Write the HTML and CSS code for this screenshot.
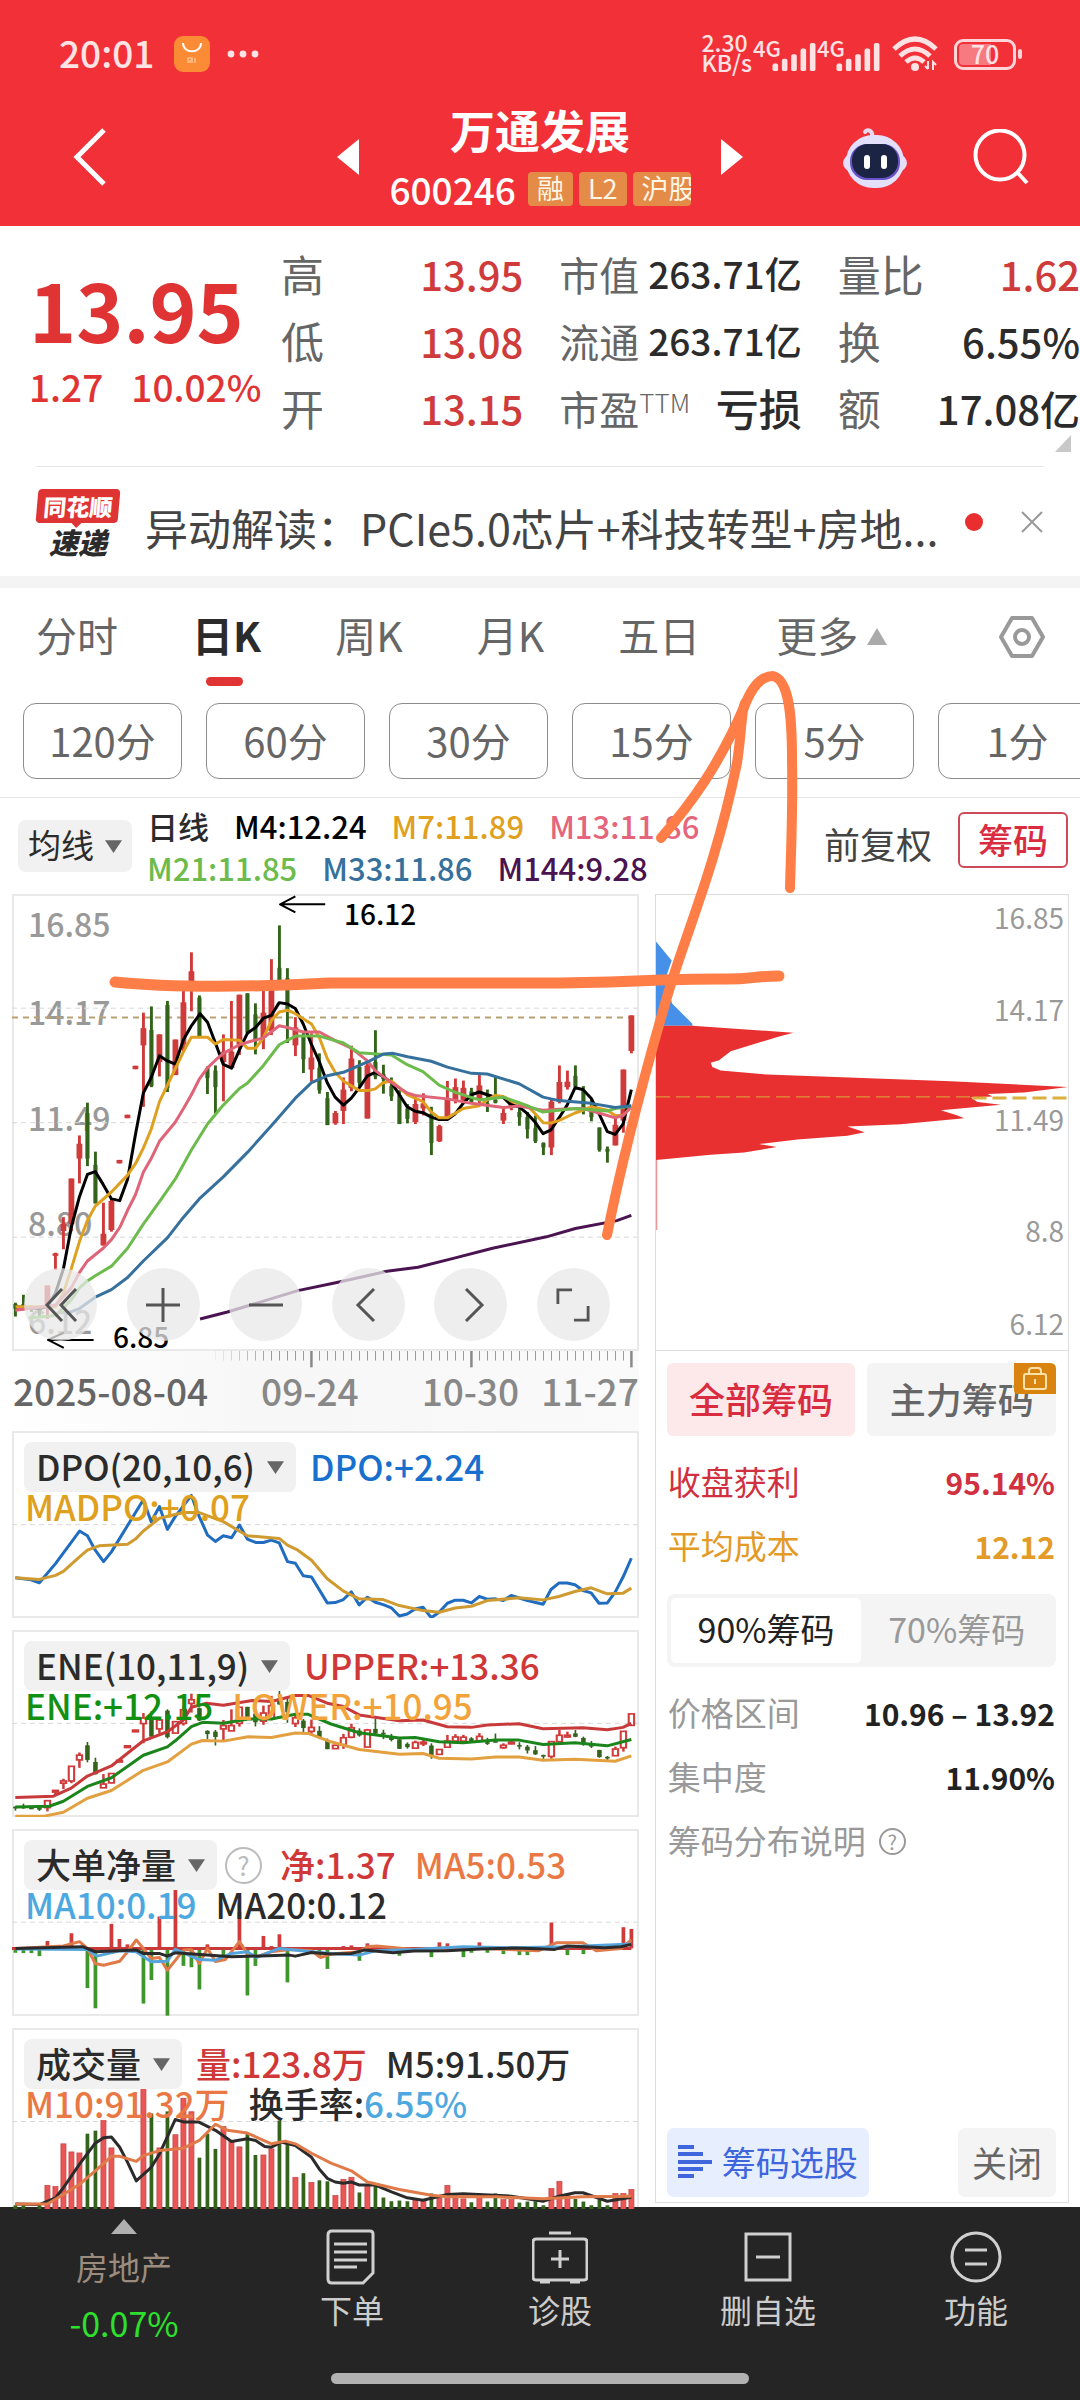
FILE: index.html
```html
<!DOCTYPE html>
<html lang="zh-CN">
<head>
<meta charset="utf-8">
<meta name="viewport" content="width=device-width, initial-scale=1">
<title>万通发展 600246</title>
<link rel="stylesheet" href="styles.css">
</head>
<body>
<div class="app">
  <header class="top">
    <div class="status">
      <span class="clock">20:01</span>
      <svg class="store" viewBox="0 0 36 36"><rect width="36" height="36" rx="9" fill="#fb8b34"/><path d="M9 7c0 11 18 11 18 0" fill="none" stroke="#fff" stroke-width="2"/><path d="M14 27v-5h4v5m-2-3v3m5-5v5" fill="none" stroke="#ffd2a6" stroke-width="1.2"/></svg>
      <svg class="dots" viewBox="0 0 32 8" fill="#ffe3e4"><circle cx="4" cy="4" r="3.4"/><circle cx="16" cy="4" r="3.4"/><circle cx="28" cy="4" r="3.4"/></svg>
      <span class="speed"><span>2.30</span><span>KB/s</span></span>
      <span class="net"><span>4G</span><svg viewBox="0 0 46 30" fill="#ffe3e4"><rect y="22" width="6" height="8" rx="2"/><rect x="10" y="17" width="6" height="13" rx="2"/><rect x="20" y="12" width="6" height="18" rx="2"/><rect x="30" y="6" width="6" height="24" rx="2"/><rect x="40" width="6" height="30" rx="2"/></svg></span>
      <span class="net"><span>4G</span><svg viewBox="0 0 46 30" fill="#ffe3e4"><rect y="22" width="6" height="8" rx="2"/><rect x="10" y="17" width="6" height="13" rx="2"/><rect x="20" y="12" width="6" height="18" rx="2"/><rect x="30" y="6" width="6" height="24" rx="2"/><rect x="40" width="6" height="30" rx="2"/></svg></span>
      <svg class="wifi" viewBox="0 0 46 36"><g fill="none" stroke="#ffe3e4" stroke-width="5"><path d="M2 13Q23-7 44 13"/><path d="M8 20Q23 6 38 20"/><path d="M14 26q9-8 18 0"/></g><circle cx="23" cy="31" r="4" fill="#ffe3e4"/><path d="M36 25v8m-3-3 3 3M41 34v-8l3 3" stroke="#ffe3e4" stroke-width="2" fill="none"/></svg>
      <span class="battery"><span>70</span></span>
    </div>
    <div class="titlebar">
      <button class="plain" aria-label="返回"><svg class="back" viewBox="0 0 34 60"><path d="M31 3 4 30l27 27" fill="none" stroke="#fff" stroke-width="5"/></svg></button>
      <button class="plain prev" aria-label="上一只"><svg class="tri" viewBox="0 0 22 36"><path d="M22 0v36L0 18z" fill="#fff"/></svg></button>
      <div class="stock">
        <h1>万通发展</h1>
        <div class="code"><span class="num">600246</span><span class="tag">融</span><span class="tag">L2</span><span class="tag cut">沪股</span></div>
      </div>
      <button class="plain next" aria-label="下一只"><svg class="tri" viewBox="0 0 22 36"><path d="M0 0v36l22-18z" fill="#fff"/></svg></button>
      <button class="plain" aria-label="智能助手"><svg class="robot" viewBox="0 0 66 64"><path d="M29 14c4-8-4-11-6-7" fill="none" stroke="#e8d8ee" stroke-width="4" stroke-linecap="round"/><ellipse cx="33" cy="38" rx="32" ry="15" fill="#eadcf2"/><rect x="4" y="10" width="58" height="53" rx="27" fill="#e3e0fc"/><rect x="8" y="19" width="50" height="36" rx="17" fill="#6a52c8"/><rect x="10" y="19" width="46" height="34" rx="16" fill="#1c2444"/><rect x="22" y="30" width="6" height="14" rx="3" fill="#fff"/><rect x="39" y="30" width="6" height="14" rx="3" fill="#fff"/></svg></button>
      <button class="plain" aria-label="搜索"><svg class="search" viewBox="0 0 56 56"><circle cx="27" cy="26" r="24.500" fill="none" stroke="#fff" stroke-width="4"/><path d="m44 43 10 11" stroke="#fff" stroke-width="4"/></svg></button>
    </div>
  </header>

  <section class="quote">
    <div class="price"><strong>13.95</strong><div><span>1.27</span><span>10.02%</span></div></div>
    <dl class="facts">
      <div><dt>高</dt><dd class="up">13.95</dd></div>
      <div class="mid"><dt>市值</dt><dd>263.71亿</dd></div>
      <div><dt>量比</dt><dd class="up">1.62</dd></div>
      <div><dt>低</dt><dd class="up">13.08</dd></div>
      <div class="mid"><dt>流通</dt><dd>263.71亿</dd></div>
      <div><dt>换</dt><dd>6.55%</dd></div>
      <div><dt>开</dt><dd class="up">13.15</dd></div>
      <div class="mid"><dt>市盈<sup>TTM</sup></dt><dd class="word">亏损</dd></div>
      <div><dt>额</dt><dd>17.08亿</dd></div>
    </dl>
    <svg class="fold" viewBox="0 0 16 17"><path d="M16 0v17H0z" fill="#c8c8c8"/></svg>
  </section>

  <section class="news">
    <div class="brand"><b>同花顺</b><i>速递</i></div>
    <a href="#news">异动解读：PCIe5.0芯片+科技转型+房地...</a>
    <span class="dot"></span>
    <button class="plain" aria-label="关闭提示"><svg class="cross" viewBox="0 0 22 22"><path d="m1 1 20 20M21 1 1 21" stroke="#999" stroke-width="2"/></svg></button>
  </section>

  <nav class="tabs">
    <button>分时</button><button class="on">日K</button><button>周K</button><button>月K</button><button>五日</button>
    <button class="more">更多<svg viewBox="0 0 20 17"><path d="M10 0 20 17H0z" fill="#aaa"/></svg></button>
    <button class="gear" aria-label="设置"><svg viewBox="0 0 46 42"><path d="M13 2h20l11 19-11 19H13L2 21z" fill="none" stroke="#999" stroke-width="4" stroke-linejoin="round"/><circle cx="23" cy="21" r="7" fill="none" stroke="#999" stroke-width="4"/></svg></button>
  </nav>
  <div class="periods">
    <button>120分</button><button>60分</button><button>30分</button><button>15分</button><button>5分</button><button>1分</button>
  </div>

  <div class="legend">
    <label class="pick avg"><select aria-label="主图指标"><option>均线</option></select><svg viewBox="0 0 16 12"><path d="M0 0h16L8 12z"/></svg></label>
    <div class="lines">
      <div><span class="dark">日线</span><span class="black">M4:12.24</span><span class="gold">M7:11.89</span><span class="pink">M13:11.86</span></div>
      <div><span class="lime">M21:11.85</span><span class="steel">M33:11.86</span><span class="plum">M144:9.28</span></div>
    </div>
    <button class="adjust">前复权</button>
    <button class="chipbtn">筹码</button>
  </div>

  <main class="board">
    <div class="charts">
      <div class="kline">
        <span class="scale s1">16.85</span><span class="scale s2">14.17</span><span class="scale s3">11.49</span><span class="scale s4">8.80</span><span class="scale s5">6.12</span>
        <svg class="plot" viewBox="30 43 1513 1325" preserveAspectRatio="none">
          <path class="grid" d="M30 374H1543M30 706H1543M30 1038H1543"/>
          <path class="last" d="M30 401H1543"/>
          <g id="candles"></g>
          <polyline class="c-black" points="38,1240 96,1245 115,1240 135,1200 154,1130 173,1010 193,920 212,856 231,848 250,885 270,927 290,932 309,870 328,740 347,620 366,575 386,512 405,527 424,536 444,465 463,425 484,390 502,415 521,475 540,537 560,548 579,495 598,447 618,430 637,403 656,395 675,358 695,362 714,375 733,420 753,480 772,530 791,590 810,632 830,655 849,635 868,605 888,570 907,560 926,572 946,590 965,625 984,660 1003,673 1022,677 1042,690 1061,697 1081,697 1100,680 1119,650 1139,625 1158,617 1177,625 1197,632 1216,633 1235,655 1254,660 1274,680 1293,705 1312,738 1331,727 1350,693 1370,655 1389,605 1408,610 1428,635 1447,680 1467,732 1486,740 1505,710 1525,610"/>
          <polyline class="c-gold" points="38,1240 135,1240 154,1200 173,1130 193,1050 212,990 231,948 270,907 309,858 328,825 347,780 366,725 386,645 424,550 444,500 463,458 502,458 521,478 540,465 579,467 598,490 618,490 637,460 656,410 675,385 695,380 714,390 753,420 772,460 791,520 810,560 830,585 868,613 888,613 907,608 926,590 946,585 984,625 1022,645 1042,675 1061,692 1081,692 1119,665 1158,657 1177,640 1197,627 1216,630 1235,643 1274,657 1293,680 1312,706 1331,707 1350,700 1389,678 1408,670 1428,660 1467,670 1486,685 1505,685 1525,660"/>
          <polyline class="c-pink" points="38,1250 135,1235 173,1185 193,1140 212,1107 250,1070 270,1045 290,1010 309,960 328,915 347,850 366,810 386,760 424,705 444,665 463,625 482,580 502,547 521,525 540,505 579,480 598,473 637,460 675,425 695,430 733,443 772,443 810,468 849,490 888,527 907,555 946,590 984,620 1003,627 1081,637 1139,650 1216,662 1254,658 1312,670 1350,667 1408,665 1447,678 1486,692 1505,685 1525,660"/>
          <polyline class="c-lime" points="70,1272 135,1265 173,1220 193,1185 212,1165 231,1150 270,1122 309,1070 347,1000 386,935 424,870 463,785 502,710 540,655 579,607 598,592 637,540 675,480 714,455 772,455 830,475 868,503 946,510 984,538 1022,558 1061,597 1100,618 1158,640 1216,632 1254,648 1312,675 1389,665 1467,672 1486,665 1525,658"/>
          <polyline class="c-steel" points="160,1260 193,1245 231,1212 270,1190 309,1155 347,1107 405,1040 444,980 482,927 540,863 600,790 656,715 714,635 753,590 791,570 830,560 888,530 926,507 950,505 985,515 1042,528 1081,545 1139,563 1177,565 1254,593 1312,632 1350,642 1428,650 1486,662 1525,657"/>
          <polyline class="c-plum" points="484,1275 550,1255 720,1193 820,1168 935,1137 1010,1125 1100,1098 1190,1070 1320,1037 1390,1013 1490,990 1525,975"/>
          <path class="c-black" d="M714 50 677 73l37 23M677 73h109M155 1315l-38 21 38 23M117 1336h110"/>
        </svg>
        <span class="mark hi">16.12</span><span class="mark lo">6.85</span>
        <div class="tools">
          <button aria-label="最早"><svg viewBox="0 0 34 34"><path d="M18 1 3 17l15 16M32 1 17 17l15 16"/></svg></button>
          <button aria-label="放大"><svg viewBox="0 0 34 34"><path d="M17 0v34M0 17h34"/></svg></button>
          <button aria-label="缩小"><svg viewBox="0 0 34 34"><path d="M0 17h34"/></svg></button>
          <button aria-label="左移"><svg viewBox="0 0 34 34"><path d="M23 1 7 17l16 16"/></svg></button>
          <button aria-label="右移"><svg viewBox="0 0 34 34"><path d="m12 1 16 16-16 16"/></svg></button>
          <button aria-label="全屏"><svg viewBox="0 0 36 36"><path d="M17 2H2v15M34 19v15H19"/></svg></button>
        </div>
      </div>
      <div class="dates">
        <svg id="ticks" viewBox="30 0 1513 50" preserveAspectRatio="none"></svg>
        <div><time>2025-08-04</time><time>09-24</time><time>10-30</time><time>11-27</time></div>
      </div>

      <section class="panel">
        <svg class="plot" viewBox="30 95 1513 557" preserveAspectRatio="none">
          <path class="grid" d="M30 374H1543"/>
          <polyline class="c-blue" points="38,532 76,538 96,547 135,490 193,393 212,407 231,450 251,484 270,455 347,300 366,365 386,320 405,388 424,350 463,287 482,350 502,405 521,424 540,407 560,413 579,375 598,417 618,427 637,427 656,420 675,428 695,484 714,489 733,526 753,530 791,607 810,606 830,597 849,574 868,613 888,590 907,605 926,612 946,622 965,646 984,640 1003,625 1022,620 1042,651 1061,635 1081,608 1100,599 1119,599 1139,607 1158,588 1177,596 1197,595 1216,600 1235,585 1274,600 1312,611 1331,567 1350,548 1370,548 1389,553 1408,570 1428,577 1447,608 1467,607 1486,575 1505,530 1525,474"/>
          <polyline class="c-ochre" points="38,532 96,537 135,525 154,513 193,470 212,450 240,437 309,432 328,417 347,393 386,355 444,338 482,338 540,365 598,407 675,415 695,435 720,450 753,480 791,535 830,572 868,595 926,597 965,615 1022,630 1061,635 1100,622 1139,617 1177,600 1254,592 1312,598 1350,588 1389,573 1428,562 1467,580 1505,578 1525,563"/>
        </svg>
        <div class="row"><label class="pick"><select aria-label="副图一"><option>DPO(20,10,6)</option></select><svg viewBox="0 0 16 12"><path d="M0 0h16L8 12z"/></svg></label><span class="blue">DPO:+2.24</span></div>
        <div class="row two"><span class="gold">MADPO:+0.07</span></div>
      </section>

      <section class="panel">
        <svg class="plot" viewBox="30 692 1513 557" preserveAspectRatio="none">
          <path class="grid" d="M30 970H1543"/>
          <g id="hollow"></g>
          <polyline class="c-red" points="38,1191 130,1187 173,1163 212,1127 270,1097 347,1022 405,995 444,960 463,922 500,910 540,916 610,902 656,905 714,887 745,887 791,910 830,920 868,945 965,962 1022,960 1081,980 1139,982 1177,975 1254,971 1312,986 1408,983 1467,989 1505,982 1525,970"/>
          <polyline class="c-green" points="38,1219 120,1217 154,1202 212,1158 270,1132 347,1065 405,1040 424,1022 463,980 490,967 540,970 600,957 656,957 714,943 745,943 800,972 868,998 965,1014 1003,1012 1061,1025 1119,1028 1197,1020 1254,1020 1312,1033 1389,1028 1467,1037 1525,1018"/>
          <polyline class="c-sand" points="38,1247 110,1246 154,1235 212,1193 270,1170 347,1110 405,1085 463,1032 490,1021 540,1023 600,1010 656,1012 714,999 745,1000 800,1025 868,1048 965,1062 1022,1060 1061,1074 1139,1076 1197,1070 1254,1070 1312,1080 1389,1077 1486,1083 1525,1067"/>
        </svg>
        <div class="row"><label class="pick"><select aria-label="副图二"><option>ENE(10,11,9)</option></select><svg viewBox="0 0 16 12"><path d="M0 0h16L8 12z"/></svg></label><span class="red">UPPER:+13.36</span></div>
        <div class="row two"><span class="green">ENE:+12.15</span><span class="amber">LOWER:+10.95</span></div>
      </section>

      <section class="panel">
        <svg class="plot" viewBox="30 30 1513 556" preserveAspectRatio="none">
          <path class="grid" d="M30 307H1543"/>
          <g id="flow"></g>
          <path class="c-red" d="M30 385H1525"/>
          <polyline class="c-orange" points="38,385 154,378 193,365 212,385 231,430 251,435 290,423 309,395 330,360 347,385 366,415 386,412 405,450 444,390 463,388 482,430 502,385 521,424 545,418 579,365 598,400 620,410 656,395 700,388 753,392 775,412 800,402 868,395 888,380 910,378 1000,388 1100,382 1300,392 1345,368 1408,368 1440,392 1500,385 1525,360"/>
          <polyline class="c-sky" points="38,387 212,388 235,408 290,392 330,395 366,425 405,423 424,388 482,418 521,420 560,400 598,395 620,412 675,385 753,395 800,400 868,405 907,392 1000,388 1119,380 1240,383 1370,380 1525,372"/>
          <polyline class="c-ink" points="38,385 200,380 231,395 330,390 347,400 385,400 405,408 424,398 560,410 700,405 714,408 753,397 800,402 849,400 880,390 950,398 1000,393 1080,392 1160,387 1240,384 1300,386 1340,388 1370,378 1460,383 1500,380 1525,373"/>
        </svg>
        <div class="row"><label class="pick"><select aria-label="副图三"><option>大单净量</option></select><svg viewBox="0 0 16 12"><path d="M0 0h16L8 12z"/></svg></label><button class="help" aria-label="说明">?</button><span class="red">净:1.37</span><span class="orange">MA5:0.53</span></div>
        <div class="row two"><span class="sky">MA10:0.19</span><span class="dark">MA20:0.12</span></div>
      </section>

      <section class="panel volume">
        <svg class="plot" viewBox="30 627 1513 536" preserveAspectRatio="none">
          <path class="grid" d="M30 904H1543"/>
          <g id="volume"></g>
          <polyline class="c-ink" points="38,1148 96,1150 135,1130 154,1100 193,1030 231,968 251,952 270,950 290,980 309,1025 330,1080 366,1040 386,1000 424,898 444,905 480,905 521,930 560,963 598,955 618,960 640,978 656,980 680,965 714,975 753,1010 772,1045 791,1072 810,1083 830,1087 849,1083 868,1092 907,1092 946,1112 984,1130 1022,1137 1081,1120 1119,1118 1235,1125 1312,1140 1350,1125 1389,1115 1408,1115 1467,1140 1525,1128"/>
          <polyline class="c-orange" points="38,1148 115,1148 154,1120 193,1090 231,1050 270,1007 290,1007 330,1022 347,1005 386,990 444,983 482,960 521,912 550,930 598,938 656,970 690,962 714,970 753,998 800,1027 849,1050 888,1083 965,1105 1042,1122 1081,1127 1200,1127 1312,1133 1408,1127 1525,1125"/>
        </svg>
        <div class="row"><label class="pick"><select aria-label="副图四"><option>成交量</option></select><svg viewBox="0 0 16 12"><path d="M0 0h16L8 12z"/></svg></label><span class="red">量:123.8万</span><span class="dark">M5:91.50万</span></div>
        <div class="row two"><span class="orange">M10:91.32万</span><span class="dark">换手率:<b class="sky">6.55%</b></span></div>
      </section>
    </div>

    <aside class="chips">
      <div class="profile">
        <svg class="plot" viewBox="166 43 1236 1368" preserveAspectRatio="none">
          <path d="M166 183 213 240 196 290 200 330 215 370 275 430V436H166z" fill="#4790ea"/>
          <path d="M166 436H275L578 457 530 470 390 513 355 540 330 547 335 560 360 571 500 583 1050 603 1401 620 1270 637 1160 641 1175 649 1110 652 1130 665 1200 674 1020 690 1068 705 1090 714 900 732 740 739 792 756 740 767 590 778 475 792 528 801 430 817 330 824 166 840z" fill="#e83030"/>
          <path d="M166 840h4v210h-4z" fill="#e89a9a"/>
          <path class="cost thin" d="M166 650H1115"/><path class="cost" d="M1115 653H1402"/>
        </svg>
        <span class="s1">16.85</span><span class="s2">14.17</span><span class="s3">11.49</span><span class="s4">8.8</span><span class="s5">6.12</span>
      </div>
      <div class="detail">
        <div class="who"><button class="on">全部筹码</button><button>主力筹码<svg viewBox="0 0 42 31"><path d="M0 0h36q6 0 6 6v25H4q-4 0-4-4z" fill="#d98310"/><g fill="none" stroke="#ffe2a8" stroke-width="2"><rect x="10" y="11" width="22" height="15" rx="2"/><path d="M15 11V8q0-3 3-3h6q3 0 3 3v3M21 16v5"/></g></svg></button></div>
        <div class="kv crimson"><span>收盘获利</span><b>95.14%</b></div>
        <div class="kv honey"><span>平均成本</span><b>12.12</b></div>
        <div class="seg"><button class="on">90%筹码</button><button>70%筹码</button></div>
        <div class="kv"><span>价格区间</span><b>10.96 – 13.92</b></div>
        <div class="kv"><span>集中度</span><b>11.90%</b></div>
        <div class="kv"><span>筹码分布说明<button class="help small" aria-label="筹码分布说明">?</button></span></div>
        <div class="actions"><button class="pickstock"><svg viewBox="0 0 34 34"><path d="M0 2h16M0 9h25M0 17h34M0 24h25M0 31h16" stroke="#3f66dc" stroke-width="4"/></svg>筹码选股</button><button>关闭</button></div>
      </div>
    </aside>
  </main>

  <footer class="bottom">
    <nav>
      <a href="#sector" class="sector"><svg viewBox="0 0 26 15"><path d="M13 0 26 15H0z" fill="#b0b0b0"/></svg><span>房地产</span><em>-0.07%</em></a>
      <a href="#order"><svg viewBox="0 0 56 56"><path d="M8 2h38q3 0 3 3v39l-10 10H8q-4 0-4-4V6q0-4 4-4zM10 15h33M10 23h33M10 31h33M10 38h23"/></svg><span>下单</span></a>
      <a href="#diagnose"><svg viewBox="0 0 56 56"><path d="M4 10h48q3 0 3 3v35q0 3-3 3H4q-3 0-3-3V13q0-3 3-3zM17 4h22M19 30h18M28 21v18M8 53h10M38 53h10"/></svg><span>诊股</span></a>
      <a href="#remove"><svg viewBox="0 0 56 56"><path d="M6 5h44v46H6zM16 28h24"/></svg><span>删自选</span></a>
      <a href="#tools"><svg viewBox="0 0 56 56"><circle cx="28" cy="28" r="24"/><path d="M17 21h22M17 35h22"/></svg><span>功能</span></a>
    </nav>
    <div class="home"></div>
  </footer>

  <svg class="ink" viewBox="0 0 1080 2400" preserveAspectRatio="none">
    <path d="M115 982C170 988 260 987 330 983H540C620 983 650 979 720 979 750 980 752 976 779 976" stroke-width="11"/>
    <path d="M607 1235C622 1160 640 1090 667 997 685 935 715 870 737 763 742 730 741 712 745 703" stroke-width="10"/>
    <path d="M661 838C690 805 720 765 747 700 755 682 764 676 773 676 790 680 792 720 792 760 793 810 791 850 790 888" stroke-width="10"/>
  </svg>
</div>
<script src="charts.js"></script>
</body>
</html>
```
FILE: styles.css
```css
* { box-sizing: border-box; }
body { margin: 0; background: #fff; color: #2b2b2b; font-family: "Noto Sans CJK SC", "Noto Sans", sans-serif; font-size: 36px; line-height: 1; }
button, select { font: inherit; color: inherit; background: none; border: 0; padding: 0; margin: 0; }
a { color: inherit; text-decoration: none; }
h1, dl, dd { margin: 0; }
svg { display: block; flex: none; }
.app { position: relative; overflow: hidden; }

.top { background: #f13038; color: #fff; height: 226px; }
.status { display: flex; align-items: center; height: 88px; padding: 20px 64px 0 59px; color: #ffe3e4; font-weight: 500; }
.clock { font-size: 37px; padding-bottom: 3px; }
.store { width: 36px; height: 36px; margin-left: 20px; }
.dots { width: 32px; height: 8px; margin-left: 17px; }
.speed { display: flex; flex-direction: column; font-size: 23px; line-height: 20px; margin-left: auto; padding-bottom: 4px; }
.net { display: flex; align-items: flex-start; font-size: 22px; line-height: 20px; margin-left: 1px; }
.net svg { width: 44px; height: 28px; margin: 6px 0 0 -9px; }
.wifi { width: 46px; height: 36px; margin-left: 12px; }
.battery { position: relative; width: 62px; height: 31px; margin-left: 16px; border: 3px solid #ffd5d7; border-radius: 9px; font-size: 25px; line-height: 24px; text-align: center; background: linear-gradient(90deg, #f77a80 62%, transparent 62%) content-box; padding: 2px; }
.battery span { display: block; margin-top: -3px; }
.battery::after { content: ""; position: absolute; right: -9px; top: 7px; width: 4px; height: 10px; background: #ffd5d7; border-radius: 2px; }
.titlebar { display: flex; align-items: center; height: 138px; padding: 0 51px 0 73px; }
.back { width: 34px; height: 60px; }
.tri { width: 22px; height: 36px; }
.prev { margin-left: auto; }
.stock { width: 304px; margin: 0 29px; display: flex; flex-direction: column; align-items: center; gap: 19px; }
.stock h1 { font-size: 45px; font-weight: 700; line-height: 45px; }
.code { display: flex; align-items: center; gap: 6px; }
.num { font-size: 37px; font-weight: 500; margin-right: 6px; }
.tag { background: #e38b47; border-radius: 4px; font-size: 27px; line-height: 32px; padding: 0 9px 2px; color: #fff6e6; }
.tag.cut { width: 58px; overflow: hidden; white-space: nowrap; padding-right: 0; }
.next { margin-right: 99px; }
.robot { width: 66px; height: 64px; }
.search { width: 56px; height: 56px; margin-left: 65px; }

.quote { position: relative; display: flex; height: 241px; padding-top: 14px; }
.quote::after { content: ""; position: absolute; left: 37px; right: 37px; bottom: 0; height: 1px; background: #e4e4e4; }
.price { flex: 0 0 281px; padding: 28px 0 0 29px; color: #e03434; }
.price strong { display: block; font-size: 80px; font-weight: 700; line-height: 80px; }
.price div { display: flex; gap: 28px; margin-top: 19px; font-size: 37px; font-weight: 500; line-height: 38px; }
.facts { flex: 1; display: grid; grid-template-columns: repeat(3, 1fr); column-gap: 36px; grid-auto-rows: 67px; }
.facts div { display: flex; justify-content: space-between; align-items: center; white-space: nowrap; }
dt { font-size: 43px; color: #666; }
.mid dt { font-size: 40px; }
dt sup { font-size: 26px; line-height: 24px; vertical-align: 12px; font-weight: 300; }
dd { font-size: 40px; font-weight: 500; }
.mid dd { font-size: 37px; }
.mid .word { font-size: 43px; }
.up { color: #cf3b3b; }
.fold { position: absolute; right: 9px; bottom: 15px; width: 16px; height: 17px; }

.news { display: flex; align-items: center; height: 121px; padding: 0 37px; border-bottom: 12px solid #f4f4f4; }
.brand { width: 82px; text-align: center; font-size: 25px; font-weight: 900; }
.brand b { display: block; position: relative; background: #df3434; color: #fff; border-radius: 4px; line-height: 34px; font-size: 23px; font-weight: 900; transform: skewX(-5deg); }
.brand b::after { content: ""; position: absolute; left: 36px; top: 34px; border: 5px solid transparent; border-top-color: #df3434; }
.brand i { display: block; margin-top: 4px; font-size: 29px; line-height: 28px; }
.news a { margin-left: 26px; font-size: 43px; line-height: 44px; padding-top: 10px; color: #444; white-space: nowrap; }
.dot { width: 18px; height: 18px; border-radius: 50%; background: #e82e2e; margin-left: auto; }
.news .plain { margin-left: 38px; }
.cross { width: 22px; height: 22px; }

.tabs { display: flex; gap: 74px; align-items: flex-start; height: 115px; padding: 25px 35px 0 36px; color: #666; }
.tabs button { position: relative; font-size: 41px; line-height: 42px; white-space: nowrap; }
.tabs .on { color: #2b2b2b; font-weight: 700; }
.tabs .on::after { content: ""; position: absolute; left: 14px; top: 64px; width: 37px; height: 9px; border-radius: 5px; background: #e03434; }
.tabs .more { display: flex; align-items: center; gap: 9px; margin-left: 2px; }
.more svg { width: 20px; height: 17px; margin-top: 4px; }
.tabs .gear { margin: 3px 0 0 auto; }
.gear svg { width: 46px; height: 42px; }
.periods { display: flex; gap: 24px; overflow: hidden; padding: 0 0 18px 23px; border-bottom: 1px solid #e4e4e4; }
.periods button { flex: 0 0 159px; height: 76px; padding-bottom: 3px; border: 1px solid #8c8c8c; border-radius: 13px; font-size: 40px; color: #666; }

.legend { display: flex; align-items: center; height: 96px; padding: 0 12px 0 18px; }
.pick { display: inline-flex; align-items: center; height: 50px; background: #f1f1f1; border-radius: 8px; padding: 0 12px; gap: 11px; }
.pick select { appearance: none; line-height: 47px; height: 50px; padding-bottom: 3px; }
.pick svg { width: 17px; height: 13px; fill: #666; }
.avg { height: 52px; font-size: 33px; padding: 0 10px; font-weight: 400; }
.lines { margin-left: 15px; margin-top: 2px; font-size: 31px; font-weight: 500; }
.lines div { display: flex; gap: 25px; height: 42px; line-height: 42px; }
.adjust { margin-left: auto; font-size: 36px; margin: -6px 26px 0 auto; color: #444; }
.chipbtn { width: 110px; height: 56px; padding-bottom: 3px; border: 2px solid #cd4a58; border-radius: 6px; color: #d92c40; font-weight: 500; font-size: 35px; margin-top: -12px; }

.board { display: flex; gap: 16px; padding: 0 11px 0 12px; }
.charts { flex: 628 1 0; min-width: 0; }
.plot { position: absolute; left: -2px; top: -2px; width: calc(100% + 4px); height: calc(100% + 4px); }
.plot polyline, .plot path[class] { fill: none; stroke-width: 3; vector-effect: non-scaling-stroke; stroke-linejoin: round; }
.kline { position: relative; height: 457px; border: 2px solid #e9e9e9; }
.scale { position: absolute; left: 14px; margin-top: -3px; font-size: 32px; font-weight: 500; color: #999; }
.s1 { top: 14px; } .s2 { top: 102px; } .s3 { top: 208px; } .s4 { top: 313px; } .s5 { top: 411px; }
.mark { position: absolute; font-size: 28px; font-weight: 500; color: #000; }
.hi { left: 330px; top: 3px; }
.lo { left: 99px; top: 426px; }
.tools { position: absolute; left: 10px; right: 27px; bottom: 8px; display: flex; justify-content: space-between; }
.tools button { width: 73px; height: 73px; border-radius: 50%; background: rgba(232, 232, 232, .75); display: grid; place-items: center; }
.tools svg { width: 34px; height: 34px; fill: none; stroke: #555; stroke-width: 3; }
.dates { height: 80px; background: linear-gradient(90deg, #fff, #f7f7f7 40%, #fafafa); }
.dates svg { width: 100%; height: 17px; }
.dates div { display: flex; padding: 3px 0 0 1px; font-size: 37px; font-weight: 500; line-height: 38px; color: #888; }
.dates time:nth-child(1) { color: #666; margin-right: auto; }
.dates time:nth-child(2) { margin-right: 63px; }
.dates time:nth-child(3) { margin-right: 22px; }

.panel { position: relative; height: 187px; margin-bottom: 12px; padding: 9px 0 0 10px; border: 2px solid #e9e9e9; font-weight: 500; font-size: 35px; }
.volume { height: 179px; margin-bottom: 0; border-bottom: 0; }
.row { position: relative; display: flex; align-items: center; gap: 14px; height: 50px; white-space: nowrap; }
.row span { padding-bottom: 3px; }
.row span + span { margin-left: 5px; }
.row.two { height: 30px; padding-left: 1px; }
.row b { font-weight: 500; }
.help { width: 37px; height: 37px; border: 2px solid #bbb; border-radius: 50%; color: #bbb; font-size: 26px; line-height: 30px; font-weight: 400; margin: 0 4px 0 -6px; }
.help.small { width: 27px; height: 27px; border-color: #999; color: #999; font-size: 20px; line-height: 21px; margin: 2px 0 0 13px; }

.grid { stroke: #d8d8d8; stroke-dasharray: 5 4; }
.plot path.grid { stroke-width: 1; }
.last { stroke: #b7a173; stroke-dasharray: 6 5; }
.plot path.last { stroke-width: 2; }
.cost { stroke: #dcae3c; stroke-dasharray: 14 6; }
.plot .cost.thin { stroke-width: 1; }
.c-black { stroke: #000; } .c-ink { stroke: #2b2b2b; } .c-gold { stroke: #dfa020; } .c-ochre { stroke: #cf9b30; } .c-pink { stroke: #df6478; }
.c-lime { stroke: #6cbb4c; } .c-steel { stroke: #36709c; } .c-plum { stroke: #4a1450; } .c-blue { stroke: #1f6cc0; } .c-red { stroke: #c83a3a; }
.c-green { stroke: #1b841b; } .c-sand { stroke: #e2a040; } .c-orange { stroke: #e07a48; } .c-sky { stroke: #55a5dc; }
.plot path.c-black { stroke-width: 2; }
.dark { color: #2b2b2b; } .black { color: #000; } .gold { color: #dfa020; } .pink { color: #e5667c; } .lime { color: #6cbb4c; } .steel { color: #36709c; } .plum { color: #4a1450; }
.blue { color: #186fce; } .red { color: #d03838; } .green { color: #129012; } .amber { color: #f2a33a; } .orange { color: #ea7845; } .sky { color: #4ea8e0; }

.chips { flex: 413 1 0; min-width: 0; display: flex; flex-direction: column; margin-bottom: 4px; border: 1px solid #ddd; }
.profile { position: relative; overflow: hidden; height: 456px; border-bottom: 1px solid #ddd; color: #999; font-size: 28px; }
.profile .plot { left: 0; top: 0; width: 100%; height: 100%; }
.profile span { position: absolute; right: 4px; margin-top: -6px; }
.profile .s2 { top: 106px; } .profile .s3 { top: 216px; } .profile .s4 { top: 327px; } .profile .s5 { top: 420px; }
.profile .s1 { top: 14px; }
.detail { flex: 1; display: flex; flex-direction: column; padding: 12px 12px 5px 11px; }
.who { display: grid; grid-template-columns: 1fr 1fr; gap: 12px; margin-bottom: 15px; }
.who button { position: relative; height: 73px; padding-bottom: 3px; border-radius: 6px; background: #f4f4f4; color: #666; font-size: 36px; font-weight: 500; }
.who .on { background: #fee9ea; color: #d92c40; }
.who svg { position: absolute; right: 0; top: 0; width: 42px; height: 31px; }
.kv { display: flex; justify-content: space-between; align-items: center; height: 64px; padding: 0 1px 3px; font-size: 33px; color: #999; }
.kv span { display: flex; align-items: center; }
.kv b { font-size: 30px; font-weight: 700; color: #222; }
.crimson, .crimson b { color: #d0303f; }
.honey, .honey b { color: #e39a26; }
.seg { display: grid; grid-template-columns: 1fr 1fr; height: 73px; padding: 4px; border-radius: 8px; background: #f4f4f4; margin: 15px 0; color: #999; font-size: 34px; }
.seg button { padding-bottom: 3px; border-radius: 5px; }
.seg .on { background: #fff; color: #222; }
.actions { display: flex; justify-content: space-between; margin-top: auto; }
.actions button { height: 69px; padding: 0 14px 2px; border-radius: 7px; background: #f4f4f4; color: #666; font-size: 35px; display: flex; align-items: center; gap: 10px; }
.actions .pickstock { background: #e7eefe; color: #3f66dc; font-size: 34px; padding: 0 11px 2px; }
.pickstock svg { width: 34px; height: 34px; }

.bottom { background: #252525; height: 193px; color: #ccc; }
.bottom nav { display: grid; grid-template-columns: 248fr repeat(4, 208fr); height: 166px; }
.bottom a { display: flex; flex-direction: column; align-items: center; padding-top: 22px; gap: 8px; font-size: 32px; }
.bottom a > svg { width: 56px; height: 56px; fill: none; stroke: #d0d0d0; stroke-width: 3; }
.bottom .sector { padding-top: 12px; gap: 16px; color: #9c8c7e; }
.bottom .sector svg { width: 26px; height: 15px; stroke: none; }
.sector em { font-style: normal; font-size: 34px; color: #2ee02e; margin-top: 8px; }
.home { width: 418px; height: 11px; margin: 0 auto; border-radius: 6px; background: #b2b2b2; }

.ink { position: absolute; inset: 0; width: 100%; height: 100%; pointer-events: none; fill: none; stroke: #ff7d46; stroke-linecap: round; stroke-linejoin: round; }
```
FILE: charts.js
```js
// Each candle: direction (r up, g down), high, low, body top, body bottom.
const candles = `g 1228 1268 1232 1245|g 1205 1250 1232 1240|g 1235 1255 1240 1246|g 1240 1270 1244 1252|r 1178 1275 1178 1240|r 1083 1133 1085 1092|r 980 1073 1000 1020|r 868 1020 868 1000|r 743 882 767 810|g 648 832 678 810|g 790 940 828 940|r 938 1062 1028 1062|r 930 1022 933 1017|r 814 824 814 824|r 683 693 683 693|r 541 551 541 551|r 387 660 432 482|g 369 603 437 600|r 450 572 450 530|g 353 617 365 605|r 465 568 465 568|r 320 500 357 480|r 212 383 267 300|g 337 460 343 455|g 543 623 547 577|g 540 680 555 603|r 450 644 500 530|r 353 548 500 548|r 335 510 335 480|g 331 450 331 445|g 360 508 392 470|r 320 493 387 460|r 232 452 320 440|g 134 310 257 310|g 258 475 287 380|r 400 513 430 482|g 440 562 455 522|r 447 587 517 552|g 505 622 547 612|g 617 713 635 713|r 672 712 678 708|r 575 710 610 672|r 483 615 520 605|g 525 600 545 590|r 530 694 540 694|g 438 580 530 572|g 538 622 565 580|g 575 643 600 630|g 612 710 625 710|g 652 708 665 695|r 636 710 652 704|r 621 685 650 665|g 660 800 680 765|r 712 762 716 760|r 585 697 640 695|r 578 650 603 640|r 584 650 605 640|g 605 650 615 645|r 568 650 598 640|g 610 675 650 655|g 572 650 640 648|r 660 710 678 700|r 640 670 650 662|g 650 715 675 690|g 675 752 690 725|g 685 765 722 760|g 763 800 765 778|r 640 800 645 778|r 540 650 588 645|r 555 610 587 603|g 540 605 570 602|g 600 682 612 665|g 640 702 675 690|g 720 790 720 785|g 775 822 782 790|r 690 772 712 772|r 552 735 552 700|r 395 505 395 498`
  .split('|').map(s => { const [d, ...v] = s.split(' '); return [d, ...v.map(Number)]; });

// Top edge of every turnover bar; 0 means nothing is drawn.
const volume = [1152,1152,0,1153,1093,1096,970,994,997,940,931,901,982,0,0,0,793,880,982,874,943,835,875,1011,940,985,919,960,979,941,1003,1003,985,901,970,1069,1057,1084,1078,1081,1123,1075,1069,1114,1093,1090,1129,1140,1138,1140,1135,1138,1117,1130,1093,1118,1133,1143,1130,1141,1117,1135,1135,1144,1141,1140,1152,1102,1081,1120,1133,1141,1152,1135,1152,1117,1117,1105];

// Net order flow: bar end per day index, zero level at 385.
const flow = {0:398,1:399,2:399,3:408,4:363,7:340,9:503,10:563,12:312,13:357,14:373,16:549,17:479,18:290,19:585,20:198,21:437,22:441,23:507,24:373,26:405,28:277,29:525,30:437,31:348,32:378,33:343,34:486,38:412,39:446,41:378,42:376,43:422,44:370,48:407,52:411,53:367,54:370,56:411,57:398,58:367,59:398,61:402,63:405,64:405,67:308,69:405,71:402,76:322,77:327};

const RED = '#cf3a3a', GREEN = '#34641c';
const x = i => 38.3 + 19.31 * i;
const rect = (cx, w, top, bottom, attrs) =>
  `<rect x="${cx - w / 2}" y="${top}" width="${w}" height="${bottom - top}" ${attrs}/>`;

document.getElementById('candles').innerHTML = candles.map(([d, hi, lo, top, bot], i) => {
  const fill = `fill="${d === 'r' ? RED : GREEN}"`;
  return rect(x(i), 7, hi, lo, fill) + rect(x(i), d === 'r' ? 14 : 10, top, bot, fill);
}).join('');

const squash = y => 942 + 0.33 * (y - 395);
document.getElementById('hollow').innerHTML = candles.map(([d, hi, lo, top, bot], i) => {
  const [h, l, t] = [hi, lo, top].map(squash);
  const b = Math.max(squash(bot), t + 5);
  return d === 'r'
    ? rect(x(i), 6, h, t, `fill="${RED}"`) + rect(x(i), 6, b, Math.max(l, b), `fill="${RED}"`) +
      rect(x(i), 13, t, b, `fill="none" stroke="${RED}" stroke-width="5"`)
    : rect(x(i), 4, h, l, `fill="${GREEN}"`) + rect(x(i), 11, t, b, `fill="${GREEN}"`);
}).join('');

document.getElementById('flow').innerHTML = Object.entries(flow).map(([i, y]) =>
  rect(x(+i), 9, Math.min(y, 385), Math.max(y, 385), `fill="${y < 385 ? RED : '#3f962c'}"`)).join('');

document.getElementById('volume').innerHTML = volume.map((y, i) => !y ? '' :
  candles[i][0] === 'r'
    ? rect(x(i), 12, y, 1170, 'fill="#e85656" stroke="#c84646" stroke-width="2"')
    : rect(x(i), 9, y, 1170, `fill="${GREEN}"`)).join('');

let ticks = '';
for (let i = 25; i < 78; i++) {
  const major = i === 37 || i === 57 || i === 77;
  ticks += rect(x(i), major ? 6 : 2, 0, major ? 48 : 28, `fill="#888" opacity="${Math.min(1, (i - 24) / 8)}"`);
}
document.getElementById('ticks').innerHTML = ticks;
```
